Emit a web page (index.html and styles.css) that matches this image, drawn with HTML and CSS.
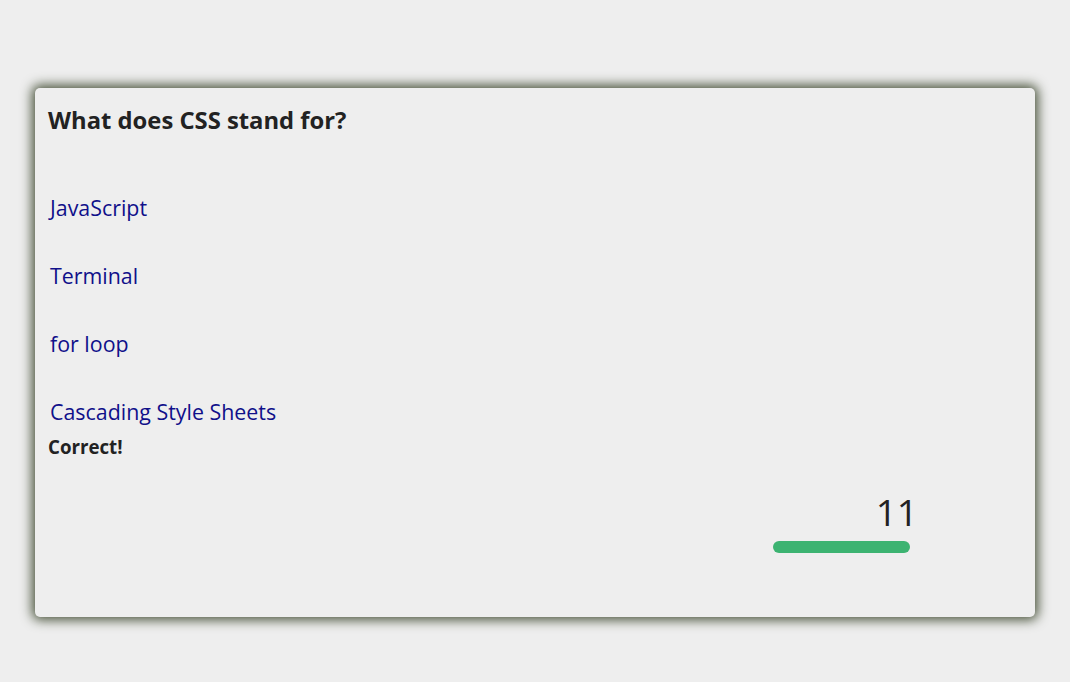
FILE: index.html
```html
<!DOCTYPE html>
<html>
<head>
<meta charset="utf-8">
<link rel="stylesheet" href="styles.css">
</head>
<body>
<div class="card">
  <h2 class="question">What does CSS stand for?</h2>
  <div class="options">
    <div class="option">JavaScript</div>
    <div class="option">Terminal</div>
    <div class="option">for loop</div>
    <div class="option">Cascading Style Sheets</div>
  </div>
  <div class="result">Correct!</div>
  <div class="timer-row">
    <div class="timer">
      <div class="count">11</div>
      <div class="bar"></div>
    </div>
  </div>
</div>
</body>
</html>
```
FILE: styles.css
```css
html, body {
  margin: 0;
  padding: 0;
  background: #eeeeee;
}
body {
  font-family: "Open Sans", "Noto Sans", sans-serif;
  color: #222222;
  padding: 88px 35px 65px 35px;
  min-height: 682px;
  box-sizing: border-box;
}
.card {
  width: 1000px;
  height: 529px;
  box-sizing: border-box;
  background: #eeeeee;
  border-radius: 5px;
  box-shadow: 0 0 12px 3px rgb(72, 82, 58);
  padding: 12px 13px;
  display: flex;
  flex-direction: column;
}
.question {
  margin: 0;
  font-size: 23.8px;
  font-weight: 700;
  line-height: 40px;
}
.options {
  display: flex;
  flex-direction: column;
  gap: 40px;
  margin-top: 54px;
  padding-left: 2px;
}
.option {
  color: #10108a;
  font-size: 21.4px;
  line-height: 28px;
}
.result {
  font-size: 18.7px;
  font-weight: 700;
  line-height: 24px;
  margin-top: 9px;
}
.timer-row {
  display: flex;
  justify-content: flex-end;
  padding-right: 104px;
  margin-top: 31px;
}
.timer {
  width: 145px;
  display: flex;
  flex-direction: column;
  align-items: flex-end;
}
.count {
  font-size: 37px;
  line-height: 44px;
  font-weight: 400;
}
.bar {
  width: 137px;
  height: 12px;
  border-radius: 6px;
  background: #3cb371;
  margin-top: 7px;
  margin-right: 8px;
}
```
